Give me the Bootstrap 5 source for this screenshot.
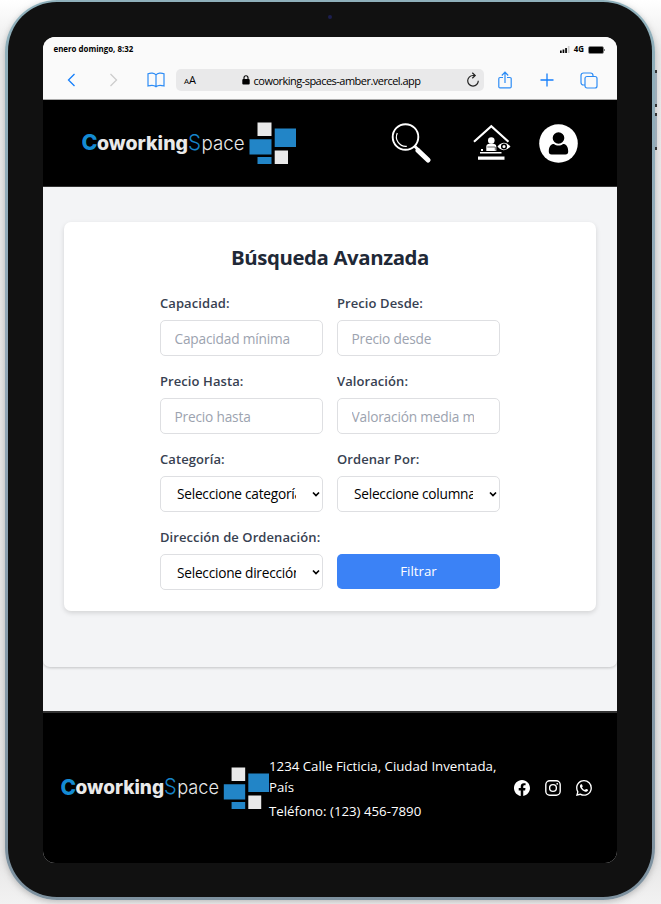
<!DOCTYPE html>
<html lang="es">
<head>
<meta charset="utf-8">
<meta name="viewport" content="width=device-width, initial-scale=1">
<title>CoworkingSpace - Búsqueda Avanzada</title>
<link href="https://cdn.jsdelivr.net/npm/bootstrap@5.3.0/dist/css/bootstrap.min.css" rel="stylesheet">
<style>
body{font-family:"Open Sans","Noto Sans",sans-serif;width:661px;height:904px;overflow:hidden;background:linear-gradient(180deg,#fff 0,#e9e9e9 55px,#e6e5e5 850px,#f2f2f2 100%);color:#000}
.tablet{width:650px;height:900px;margin-left:5px;padding:2px 3px 3px;border-radius:52px;background:linear-gradient(180deg,#8fb0bb,#93a8b8 40%,#7d919f);box-shadow:0 2px 6px #8888}
.tablet-bezel{height:895px;border-radius:49px;background:#111;padding:35px}
.tablet-screen{width:574px;height:826px;border-radius:12px;overflow:hidden;background:#f3f4f6}
.camera{width:4px;height:4px;left:328px;top:15px;background:#1d1f50}
.side-key{width:2px;left:655px;background:#9fadb8;border-top:3px solid #333;border-bottom:3px solid #333}
.key-up{top:70px;height:37px}.key-down{top:113px;height:37px}
.status{height:26px;padding:0 12px 0 10.5px;font-size:7.9px;font-weight:700}
.browser{height:63px;background:#fafafa;border-bottom:1px solid #aaa}
.toolbar{height:34px;padding-left:22px}
.toolbar svg{display:block}
.address{width:308px;height:22px;background:#e9e9ea;border-radius:5px;margin-left:11px;font-size:11.2px}
.text-size{font-size:11px}
.text-size span{font-size:8px}
.url{font-size:11px;letter-spacing:-.52px;position:relative;top:1px}
.site-header{height:87px;padding:0 39.5px 0 39px;border-bottom:1px solid #333}
.search-area{height:480px;padding:35px 21px 0;border-radius:0 0 7px 7px;box-shadow:0 1px 3px #0003}
.search-card{height:389px;border-radius:7px;box-shadow:0 2px 5px #0002;padding-top:20px}
.search-card h1{font-size:20.4px;line-height:30px;letter-spacing:-.41px;color:#1f2937;margin-bottom:21px}
.filters{display:grid;width:340px;margin:auto;grid-template-columns:163px 163px;column-gap:14px;grid-auto-rows:78.1px}
.filters label{display:block;font-size:13px;font-weight:600;line-height:20px;color:#374151;margin-bottom:7px;white-space:nowrap;letter-spacing:.08px}
.filters .form-control,.filters .form-select{height:36px;border:1px solid #dedfe2;border-radius:5px;padding:1px 25px 0 13.5px;font-size:13.7px;letter-spacing:-.19px;color:#000;background-color:#fff}
.filters .form-control::placeholder{color:#9ca3af}
.filters .form-select{padding:1px 26px 0 16px;letter-spacing:-.25px;text-overflow:clip;background-image:url("data:image/svg+xml,%3Csvg xmlns='http://www.w3.org/2000/svg' viewBox='0 0 8 8'%3E%3Cpath d='M1 2.5 4 5.5 7 2.5' fill='none' stroke='%23000' stroke-width='1.7'/%3E%3C/svg%3E");background-size:8px 8px;background-position:right 2px center}
.filters .btn{height:35px;margin-top:27px;border:0;border-radius:5px;background:#3b82f6;font-size:13.3px;padding:0}
.site-footer{height:152px;margin-top:44px;border-top:2px solid #333;padding:0 25px 0 18px}
.contact{width:236px;font-size:13.25px;line-height:21px;padding-top:4px}
.contact p{margin:0 0 3px}
</style>
<script src="https://cdn.jsdelivr.net/npm/bootstrap@5.3.0/dist/js/bootstrap.bundle.min.js"></script>
</head>
<body>
<svg class="d-none" xmlns="http://www.w3.org/2000/svg">
<symbol id="brand" viewBox="0 0 214 42" preserveAspectRatio="none">
<g font-family="Inter,sans-serif">
<text x="-.5" y="27.800" font-size="22" font-weight="800" fill="#148bd3" textLength="16" lengthAdjust="spacingAndGlyphs">C</text>
<text x="15" y="27.500" font-size="19" font-weight="800" fill="#e9e9e9" textLength="91" lengthAdjust="spacingAndGlyphs">oworking</text>
<text x="106" y="27.500" font-size="22" font-weight="300" fill="#1683c8" textLength="13" lengthAdjust="spacingAndGlyphs">S</text>
<text x="119.500" y="27.500" font-size="19" font-weight="300" fill="#e9e9e9" textLength="43" lengthAdjust="spacingAndGlyphs">pace</text>
</g>
<path fill="#e9e9e9" d="M175.500.5h14v13.500h-14zM192.700 28.500h13.300V42h-13.300z"/>
<path fill="#2285c7" d="M192.700 6.500H214V25h-21.300zM167.500 17.200H189.500V32.500H167.500zM175.500 35h14v7h-14z"/>
</symbol>
</svg>
<div class="tablet">
<div class="tablet-bezel">
<div class="tablet-screen">
<div class="browser">
<div class="status d-flex align-items-center justify-content-between">
<span>enero domingo, 8:32</span>
<span class="d-flex align-items-center gap-1"><svg width="10" height="7" viewBox="0 0 10 7"><path d="M0 4.500h1.700V7H0zM2.600 3.500h1.700V7H2.600zM5.200 2h1.700v5H5.200z"/><path fill="#ccc" d="M7.800 0h1.700v7H7.800z"/></svg><span>4G</span><svg width="17" height="8" viewBox="0 0 17 8"><rect x=".5" y=".5" width="15" height="7" rx="1.500" fill="#000" stroke="#888" stroke-width=".7"/><path d="M16.300 3v2" stroke="#666"/></svg></span>
</div>
<div class="toolbar d-flex align-items-center">
<svg width="14" height="16" viewBox="0 0 14 16" fill="none" stroke="#147efb" stroke-width="1.300"><path d="M9.500 2 3.500 8l6 6"/></svg>
<svg class="ms-4" width="20" height="16" viewBox="0 0 20 16" fill="none" stroke="#ccc" stroke-width="1.300"><path d="m7.500 2 6 6-6 6"/></svg>
<svg class="ms-4" width="18" height="16" viewBox="0 0 18 16" fill="none" stroke="#2d8cf5" stroke-width="1.200"><path d="M9 3C7.500.7 3.500.7 1 1.700V14c3-.8 6.500-.6 8 .8 1.500-1.400 5-1.600 8-.8V1.700C14.500.7 10.500.7 9 3zm0 0v11.500"/></svg>
<div class="address d-flex align-items-center">
<span class="text-size ms-2"><span>A</span>A</span>
<svg class="ms-auto me-1" width="8" height="10" viewBox="0 0 8 10"><rect x=".3" y="4" width="7.400" height="5.500" rx="1"/><path d="M2 4.500V2.800a2 2 0 0 1 4 0v1.700" fill="none" stroke="#000" stroke-width="1.100"/></svg>
<span class="url">coworking-spaces-amber.vercel.app</span>
<svg class="ms-auto" style="margin-right:4px" width="14" height="16" viewBox="0 0 14 16" fill="none" stroke="#222" stroke-width="1.200"><path d="M9 3.500H7a5.300 5.300 0 1 0 5.300 5.300M6.300.8l2.900 2.700-2.900 2.700"/></svg>
</div>
<svg style="margin-left:14px" width="14" height="18" viewBox="0 0 14 18" fill="none" stroke="#2d8cf5" stroke-width="1.200"><path d="M5 6.500H2c-.8 0-1.200.4-1.200 1.200v8c0 .8.400 1.200 1.200 1.200h10c.8 0 1.200-.4 1.200-1.200v-8c0-.8-.4-1.200-1.200-1.200H9M7 12V1.500M3.800 4.500 7 1.200l3.200 3.300"/></svg>
<svg style="margin-left:28px" width="14" height="16" viewBox="0 0 14 16" fill="none" stroke="#147efb" stroke-width="1.300"><path d="M7 1.500v13M.5 8h13"/></svg>
<svg style="margin-left:26px" width="18" height="17" viewBox="0 0 18 17" fill="none" stroke="#2d8cf5" stroke-width="1.200"><rect x="5" y="4.500" width="12" height="11.500" rx="2"/><path d="M5 13H3.500c-1.500 0-2.500-1-2.500-2.500v-7C1 2 2 1 3.500 1h7C12 1 13 2 13 3.500v1"/></svg>
</div>
</div>
<header class="site-header bg-black d-flex align-items-center">
<svg width="214" height="42"><use href="#brand"/></svg>
<svg style="margin-left:94.500px" width="40" height="40" viewBox="0 0 40 40" fill="none" stroke="#fff"><circle cx="14.500" cy="14" r="12.800" stroke-width="1.900"/><path d="M6.300 10a9.400 9.400 0 0 0 9.500 13.300" stroke-width="1.200"/><path d="m23.500 23 4 4" stroke-width="3"/><path d="m27 27.500 10 9.500" stroke-width="5" stroke-linecap="round"/></svg>
<svg style="margin-left:41px" width="40" height="38" viewBox="0 0 40 38"><path d="M2 17.800 19.300 2.300l17.200 15.500" fill="none" stroke="#fff" stroke-width="2.200"/><g fill="#fff"><circle cx="19.300" cy="16.500" r="3.300"/><path d="M14.300 27v-4.500c0-2.300 2-3 5-3s5 .7 5 3V27zM8 28h21.500v1.500H8zM6 32.500h26.500v3.300H6zM9 25h2v2H9zM25.500 22.500q6.500-7.500 13 0-6.500 7.500-13 0z"/></g><circle cx="32" cy="22.500" r="2.300" fill="#fff" stroke="#000" stroke-width="1.500"/><path d="M15.300 23h8v3.500" fill="none" stroke="#000" stroke-width=".6"/></svg>
<svg class="ms-auto" width="39" height="39" viewBox="0 0 39 39"><circle cx="19.500" cy="19.500" r="19.300" fill="#fff"/><circle cx="19.500" cy="14" r="5.800"/><path d="M9.800 27.500c0-5 2-7.500 5.200-7.500 2.500 2 6.500 2 9 0 3.200 0 5.200 2.500 5.200 7.500 0 2-.8 3-2.800 3H12.600c-2 0-2.800-1-2.800-3z"/></svg>
</header>
<main>
<div class="search-area">
<section class="search-card bg-white">
<h1 class="text-center fw-bold">Búsqueda Avanzada</h1>
<form class="filters">
<div><label for="cap">Capacidad:</label><input id="cap" class="form-control" placeholder="Capacidad mínima"></div>
<div><label for="desde">Precio Desde:</label><input id="desde" class="form-control" placeholder="Precio desde"></div>
<div><label for="hasta">Precio Hasta:</label><input id="hasta" class="form-control" placeholder="Precio hasta"></div>
<div><label for="val">Valoración:</label><input id="val" class="form-control" placeholder="Valoración media mínima"></div>
<div><label for="cat">Categoría:</label><select id="cat" class="form-select"><option>Seleccione categoría</option></select></div>
<div><label for="ord">Ordenar Por:</label><select id="ord" class="form-select"><option>Seleccione columna</option></select></div>
<div><label for="dir">Dirección de Ordenación:</label><select id="dir" class="form-select"><option>Seleccione dirección</option></select></div>
<div><button type="button" class="btn btn-primary w-100">Filtrar</button></div>
</form>
</section>
</div>
</main>
<footer class="site-footer bg-black text-white d-flex align-items-center">
<svg class="flex-shrink-0" width="208" height="42"><use href="#brand"/></svg>
<div class="contact"><p>1234 Calle Ficticia, Ciudad Inventada, País</p><p>Teléfono: (123) 456-7890</p></div>
<div class="d-flex ms-auto" style="gap:15px">
<svg width="16" height="16" viewBox="0 0 16 16" fill="#fff"><path d="M16 8.049c0-4.446-3.582-8.050-8-8.050C3.580 0-.002 3.603-.002 8.050c0 4.017 2.926 7.347 6.750 7.951v-5.625h-2.030V8.050H6.750V6.275c0-2.017 1.195-3.131 3.022-3.131.876 0 1.791.157 1.791.157v1.980h-1.009c-.993 0-1.303.621-1.303 1.258v1.510h2.218l-.354 2.326H9.250V16c3.824-.604 6.750-3.934 6.750-7.951z"/></svg>
<svg width="16" height="16" viewBox="0 0 16 16" fill="none" stroke="#fff" stroke-width="1.400"><rect x=".8" y=".8" width="14.400" height="14.400" rx="4"/><circle cx="8" cy="8" r="3.400"/><circle cx="12.200" cy="3.800" r=".9" fill="#fff" stroke="none"/></svg>
<svg width="16" height="16" viewBox="0 0 16 16" fill="#fff"><path d="M13.601 2.326A7.854 7.854 0 0 0 7.994 0C3.627 0 .068 3.558.064 7.926c0 1.399.366 2.760 1.057 3.965L0 16l4.204-1.102a7.933 7.933 0 0 0 3.790.965h.004c4.368 0 7.926-3.558 7.930-7.930A7.898 7.898 0 0 0 13.600 2.326zM7.994 14.521a6.573 6.573 0 0 1-3.356-.920l-.240-.144-2.494.654.666-2.433-.156-.251a6.560 6.560 0 0 1-1.007-3.505c0-3.626 2.957-6.584 6.591-6.584a6.560 6.560 0 0 1 4.660 1.931 6.557 6.557 0 0 1 1.928 4.660c-.004 3.639-2.961 6.592-6.592 6.592zm3.615-4.934c-.197-.099-1.170-.578-1.353-.646-.182-.065-.315-.099-.445.099-.133.197-.513.646-.627.775-.114.133-.232.148-.430.050-.197-.100-.836-.308-1.592-.985-.590-.525-.985-1.175-1.103-1.372-.114-.198-.011-.304.088-.403.087-.088.197-.232.296-.346.100-.114.133-.198.198-.330.065-.134.034-.248-.015-.347-.050-.099-.445-1.076-.612-1.470-.160-.389-.323-.335-.445-.340-.114-.007-.247-.007-.380-.007a.729.729 0 0 0-.529.247c-.182.198-.691.677-.691 1.654 0 .977.710 1.916.810 2.049.098.133 1.394 2.132 3.383 2.992.470.205.840.326 1.129.418.475.152.904.129 1.246.080.380-.058 1.171-.480 1.338-.943.164-.464.164-.860.114-.943-.049-.084-.182-.133-.380-.232z"/></svg>
</div>
</footer>
</div>
</div>
</div>
<span class="camera position-absolute rounded-circle"></span>
<span class="side-key key-up position-absolute"></span>
<span class="side-key key-down position-absolute"></span>
</body>
</html>
